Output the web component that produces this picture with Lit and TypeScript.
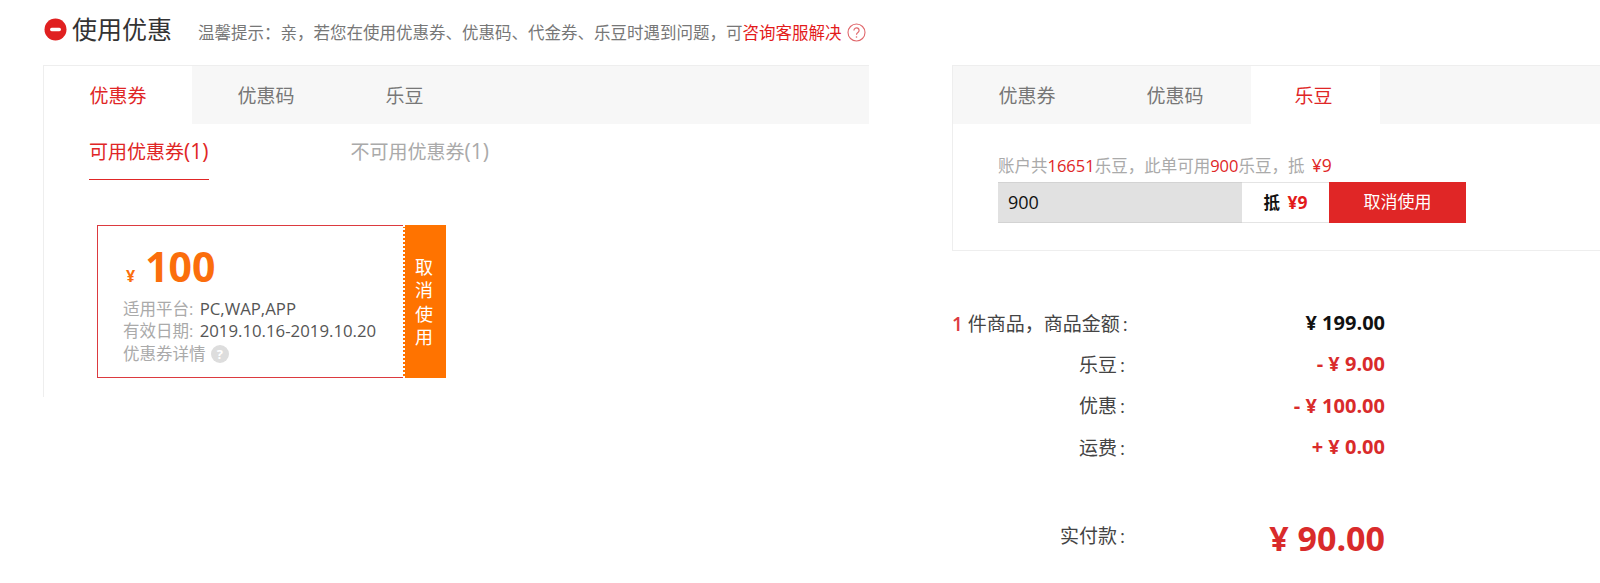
import { LitElement, html, css } from 'lit';
import { customElement } from 'lit/decorators.js';

@customElement('coupon-tabs')
export class CouponTabs extends LitElement {
  static properties = { active: { type: Number } };
  declare active: number;

  static styles = css`
    :host {
      display: flex;
      height: 58px;
      background: #f7f7f7;
      font-size: 19px;
      line-height: 60px;
      color: #777;
    }
    .tab {
      padding: 0 45.5px;
    }
    .tab:nth-child(2) {
      padding-right: 47.5px;
    }
    .tab:nth-child(3) {
      padding: 0 47.5px 0 43.5px;
    }
    .on {
      background: #fff;
      color: #e02626;
    }
  `;

  render() {
    return ['优惠券', '优惠码', '乐豆'].map(
      (t, i) => html`<div class="tab ${i === this.active ? 'on' : ''}">${t}</div>`
    );
  }
}

@customElement('app-root')
export class AppRoot extends LitElement {
  static styles = css`
    :host {
      display: flex;
      min-height: 583px;
      background: #fff;
      overflow: hidden;
      font-family: 'Open Sans', 'Noto Sans CJK SC', sans-serif;
      color: #444;
    }
    .left {
      width: 952px;
      flex: none;
    }
    .right {
      flex: 1;
      min-width: 0;
      padding-top: 65px;
    }

    /* title row */
    .title {
      display: flex;
      align-items: center;
      height: 65px;
      padding: 0 0 7px 44px;
      box-sizing: border-box;
    }
    .title h2 {
      margin: 0 26px 2px 5px;
      font-size: 25px;
      font-weight: 400;
      color: #333;
    }
    .hint {
      display: flex;
      align-items: center;
      padding-top: 6px;
      font-size: 16.5px;
      color: #777;
    }
    .hint b {
      font-weight: 400;
      color: #e31b1b;
    }
    .hint svg {
      margin-left: 5px;
    }

    /* coupon panel */
    .panel {
      margin-left: 43px;
      width: 826px;
      height: 332px;
      box-sizing: border-box;
      border-left: 1px solid #eee;
      border-top: 1px solid #eee;
    }
    .subtabs {
      display: flex;
      gap: 141px;
      padding: 1px 0 0 45px;
      font-size: 19px;
      line-height: 53px;
      color: #aaa;
    }
    .subtabs .on {
      color: #e02626;
      border-bottom: 1px solid #e02626;
      padding-right: 1px;
    }
    .subtabs small {
      font-size: 21px;
    }
    .coupon {
      display: flex;
      margin: 45px 0 0 53px;
      width: 349px;
      height: 153px;
    }
    .body {
      flex: 1;
      box-sizing: border-box;
      border: 1px solid #dc3a3f;
      border-right: none;
      padding: 14px 0 0 25px;
      font-size: 16.5px;
      line-height: 22.7px;
      color: #aaa;
    }
    .amount {
      display: flex;
      align-items: baseline;
      gap: 10px;
      height: 57.5px;
      margin-left: 3px;
      color: #fb6e0c;
      font-size: 16px;
      font-weight: 700;
      line-height: 53px;
    }
    .amount strong {
      font-size: 41px;
      font-weight: 700;
    }
    .body span {
      margin-left: 2px;
      color: #555;
      font-size: 16.8px;
    }
    .q {
      display: inline-block;
      vertical-align: 1px;
      margin-left: 1px;
      width: 18px;
      height: 18px;
      border-radius: 50%;
      background: #ddd;
      color: #fff;
      font-size: 13px;
      font-style: normal;
      font-weight: 700;
      line-height: 18px;
      text-align: center;
    }
    .cancel {
      width: 43px;
      box-sizing: border-box;
      padding: 2px 3px 0 0;
      border-left: 2px dotted #fff;
      background: #ff7300;
      color: #fff;
      font-size: 18px;
      line-height: 23.5px;
      text-align: center;
      display: flex;
      align-items: center;
      justify-content: center;
    }
    .cancel div {
      width: 18px;
    }

    /* le dou panel */
    .ledou {
      height: 186px;
      box-sizing: border-box;
      border: 1px solid #eee;
      border-right: none;
    }
    .ledou-body {
      padding: 29px 0 0 45px;
    }
    .avail {
      height: 24px;
      font-size: 16.5px;
      line-height: 24px;
      color: #aaa;
    }
    .avail em {
      font-style: normal;
      color: #e02626;
    }
    .avail .sum {
      margin-left: 3px;
      font-size: 17.5px;
    }
    .use {
      display: flex;
      width: 468px;
      height: 41px;
      margin-top: 5px;
    }
    .input {
      width: 244px;
      padding-left: 10px;
      box-sizing: border-box;
      background: #e1e1e1;
      border-top: 1px solid #d3d3d3;
      border-bottom: 1px solid #d3d3d3;
      font-size: 18px;
      line-height: 38px;
      color: #111;
    }
    .off {
      width: 87px;
      box-sizing: border-box;
      border-top: 1px solid #e4e4e4;
      border-bottom: 1px solid #e4e4e4;
      font-size: 16.5px;
      font-weight: 700;
      line-height: 39px;
      text-align: center;
      color: #111;
    }
    .off em {
      font-style: normal;
      font-size: 17.5px;
      color: #e31b1b;
      margin-left: 3px;
    }
    .btn {
      flex: 1;
      background: #e02626;
      color: #fff;
      font-size: 17px;
      line-height: 40px;
      text-align: center;
    }

    /* order summary */
    .summary {
      display: grid;
      grid-template-columns: 173px 260px;
      grid-auto-rows: 41.3px;
      align-items: center;
      margin-top: 51px;
      font-size: 19px;
      text-align: right;
    }
    .lbl {
      white-space: nowrap;
    }
    .lbl i {
      margin-left: 3px;
      font-style: normal;
    }
    .val {
      font-size: 20px;
      font-weight: 700;
      color: #d92b2b;
    }
    .black {
      color: #111;
    }
    .count {
      color: #dc3a3f;
      font-weight: 600;
    }
    .total {
      margin-top: 50px;
      grid-auto-rows: 41px;
    }
    .total .lbl {
      margin-bottom: 6px;
    }
    .total .val {
      font-size: 34px;
    }
  `;

  render() {
    return html`
      <div class="left">
        <div class="title">
          <svg width="23" height="23" viewBox="0 0 23 23">
            <circle cx="11.5" cy="11.5" r="11" fill="#e02020" />
            <rect x="6" y="9.8" width="11" height="3.4" rx="1.7" fill="#fff" />
          </svg>
          <h2>使用优惠</h2>
          <div class="hint">
            <span>温馨提示&#xFF1A;亲&#xFF0C;若您在使用优惠券、优惠码、代金券、乐豆时遇到问题&#xFF0C;可<b>咨询客服解决</b></span>
            <svg width="19" height="19" viewBox="0 0 19 19">
              <circle cx="9.5" cy="9.5" r="8.5" fill="none" stroke="#e0686c" stroke-width="1.1" />
              <path d="M6.9 7.4a2.6 2.6 0 1 1 4 2.2c-.9.6-1.4 1-1.4 2.1" fill="none" stroke="#e0686c" stroke-width="1.2" />
              <circle cx="9.5" cy="14" r=".8" fill="#e0686c" />
            </svg>
          </div>
        </div>
        <div class="panel">
          <coupon-tabs .active=${0}></coupon-tabs>
          <div class="subtabs">
            <div class="on">可用优惠券<small>(1)</small></div>
            <div>不可用优惠券<small>(1)</small></div>
          </div>
          <div class="coupon">
            <div class="body">
              <div class="amount">¥<strong>100</strong></div>
              <div>适用平台: <span>PC,WAP,APP</span></div>
              <div>有效日期: <span>2019.10.16-2019.10.20</span></div>
              <div>优惠券详情 <i class="q">?</i></div>
            </div>
            <div class="cancel"><div>取消使用</div></div>
          </div>
        </div>
      </div>
      <div class="right">
        <div class="ledou">
          <coupon-tabs .active=${2}></coupon-tabs>
          <div class="ledou-body">
            <div class="avail">账户共<em>16651</em>乐豆&#xFF0C;此单可用<em>900</em>乐豆&#xFF0C;抵 <em class="sum">¥9</em></div>
            <div class="use">
              <div class="input">900</div>
              <div class="off">抵 <em>¥9</em></div>
              <div class="btn">取消使用</div>
            </div>
          </div>
        </div>
        <div class="summary">
          <div class="lbl"><span class="count">1</span> 件商品&#xFF0C;商品金额<i>:</i></div>
          <div class="val black">¥ 199.00</div>
          <div class="lbl">乐豆<i>:</i></div>
          <div class="val">- ¥ 9.00</div>
          <div class="lbl">优惠<i>:</i></div>
          <div class="val">- ¥ 100.00</div>
          <div class="lbl">运费<i>:</i></div>
          <div class="val">+ ¥ 0.00</div>
        </div>
        <div class="summary total">
          <div class="lbl">实付款<i>:</i></div>
          <div class="val">¥ 90.00</div>
        </div>
      </div>
    `;
  }
}
